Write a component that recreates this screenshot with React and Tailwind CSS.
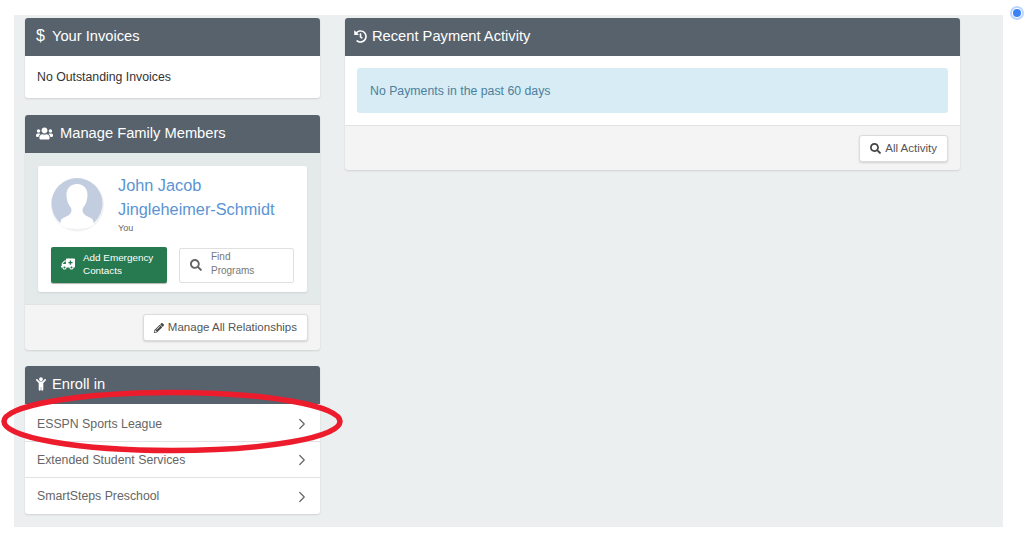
import React from 'react';
import { FaAmbulance, FaChild, FaHistory, FaPencilAlt, FaSearch, FaUsers } from 'react-icons/fa';
import { ChevronRight } from 'lucide-react';

const enrollItems = [
    { name: 'ESSPN Sports League', rowClass: 'h-[37px] pt-[3px]' },
    { name: 'Extended Student Services', rowClass: 'h-[36px] pt-[1px] border-t border-[#e2e2e2]' },
    { name: 'SmartSteps Preschool', rowClass: 'h-[37px] pt-[1px] border-t border-[#e2e2e2]' },
];

function PanelHeader({ icon, title, gap = 'gap-[7px]', pl = 'pl-[11px]' }) {
    return (
        <div className={`flex h-[38px] items-center ${gap} ${pl} rounded-t-[3px] bg-[#57626d] pb-[2px] text-[14.7px] text-white`}>
            {icon}
            <span>{title}</span>
        </div>
    );
}

function WhiteButton({ icon, label }) {
    return (
        <button type="button" className="flex h-[27px] items-center gap-[4px] rounded-[3px] border border-[#dcdcdc] bg-white px-[10px] text-[11.5px] text-[#555] shadow-[0_1px_2px_rgba(0,0,0,0.15)]">
            {icon}
            <span className="pt-[1px]">{label}</span>
        </button>
    );
}

export default function App() {
    return (
        <div className="relative h-[533px] w-[1024px] overflow-hidden bg-white pt-[15px] pl-[14px] font-['Liberation_Sans',Arial,sans-serif]">
            <div className="flex h-[512px] w-[989px] gap-[25px] bg-[#ebeff0] pt-[3px] pl-[11px]">
                <div className="flex w-[295px] flex-col">
                    <div className="rounded-[3px] bg-white shadow-[0_1px_2px_rgba(0,0,0,0.12)]">
                        <PanelHeader icon={<span className="w-[9px] text-[16px] leading-none">$</span>} title="Your Invoices" />
                        <div className="flex h-[42px] items-center pt-[1px] pl-[12px] text-[12.3px] text-[#333]">No Outstanding Invoices</div>
                    </div>

                    <div className="mt-[17px] rounded-[3px] bg-[#f4f4f4] shadow-[0_1px_2px_rgba(0,0,0,0.12)]">
                        <PanelHeader icon={<FaUsers className="h-[17px] w-[17px]" />} title="Manage Family Members" />
                        <div className="h-[152px] border-b border-[#e2e2e2] bg-[#e4e9e9] px-[13px] pt-[13px]">
                            <div className="h-[126px] rounded-[2px] bg-white px-[13px] pt-[11px] shadow-[0_1px_2px_rgba(0,0,0,0.1)]">
                                <div className="flex h-[58px] gap-[14px]">
                                    <svg width="53" height="56" viewBox="0 0 53 56" className="shrink-0">
                                        <circle cx="26.5" cy="28" r="26.5" fill="#f1f2f4" />
                                        <circle cx="26" cy="26.5" r="25.5" fill="#c2cde0" />
                                        <path d="M26 7c7 0 11 5 10.500 12-.3 5-2 9-4.500 12-1 2-.5 5 2 7 3 2 7 3 8 5l1 5c-5 3-11 4-17 4s-12-1-17-4l1-5c1-2 5-3 8-5 2.500-2 3-5 2-7-2.500-3-4.200-7-4.500-12C15 12 19 7 26 7z" fill="#fff" />
                                    </svg>
                                    <div className="-mt-[4px] min-w-0">
                                        <div className="text-[16.3px] leading-[24px] whitespace-nowrap text-[#5b94d3]">John Jacob<br />Jingleheimer-Schmidt</div>
                                        <div className="mt-[1px] text-[9px] leading-[12px] text-[#666]">You</div>
                                    </div>
                                </div>
                                <div className="mt-[12px] flex items-center gap-[12px]">
                                    <button type="button" className="flex h-[36px] w-[117px] items-center gap-[8px] rounded-[2px] bg-[#277a50] pb-[3px] pl-[10px] text-left text-[9.9px] leading-[13px] text-white shadow-[0_1px_1px_rgba(0,0,0,0.3)]">
                                        <FaAmbulance className="h-[12px] w-[14px] shrink-0 -scale-x-100" />
                                        <span>Add Emergency<br />Contacts</span>
                                    </button>
                                    <button type="button" className="flex h-[35px] w-[116px] items-center gap-[9px] rounded-[2px] border border-[#e0e0e0] bg-white pl-[10px] text-left text-[10px] leading-[14px] text-[#777]">
                                        <FaSearch className="h-[12px] w-[12px] shrink-0 text-[#666]" />
                                        <span className="pb-[2px]">Find<br />Programs</span>
                                    </button>
                                </div>
                            </div>
                        </div>
                        <div className="flex h-[45px] items-center justify-end pr-[12px]">
                            <WhiteButton icon={<FaPencilAlt className="h-[10px] w-[10px] text-[#444]" />} label="Manage All Relationships" />
                        </div>
                    </div>

                    <div className="mt-[16px] rounded-[3px] bg-white shadow-[0_1px_2px_rgba(0,0,0,0.12)]">
                        <PanelHeader icon={<FaChild className="h-[14px] w-[10px]" />} title="Enroll in" gap="gap-[6px]" />
                        {enrollItems.map((item) => (
                            <div key={item.name} className={`flex ${item.rowClass} items-center justify-between pr-[9px] pl-[12px] text-[12.3px] text-[#666]`}>
                                <span>{item.name}</span>
                                <ChevronRight className="h-[18px] w-[18px] text-[#666]" strokeWidth={1.6} />
                            </div>
                        ))}
                    </div>
                </div>

                <div className="h-[152px] w-[615px] rounded-[3px] bg-[#f4f4f4] shadow-[0_1px_2px_rgba(0,0,0,0.12)]">
                    <PanelHeader icon={<FaHistory className="h-[13px] w-[13px]" />} title="Recent Payment Activity" gap="gap-[5px]" pl="pl-[9px]" />
                    <div className="h-[70px] border-b border-[#e2e2e2] bg-white px-[12px] pt-[12px]">
                        <div className="flex h-[45px] items-center rounded-[3px] bg-[#d7ecf5] pt-[1px] pl-[13px] text-[12.3px] text-[#4d7f9c]">No Payments in the past 60 days</div>
                    </div>
                    <div className="flex h-[44px] items-center justify-end pr-[12px]">
                        <WhiteButton icon={<FaSearch className="h-[11px] w-[11px] text-[#444]" />} label="All Activity" />
                    </div>
                </div>
            </div>

            {/* red marker drawn over the first enroll row */}
            <svg className="absolute top-[388px] left-0" width="346" height="66" viewBox="0 0 346 66">
                <ellipse cx="172" cy="33.500" rx="168" ry="29" fill="none" stroke="#ec1c2d" strokeWidth="5.500" />
            </svg>

            {/* radio dot in the top right */}
            <div className="absolute top-[6px] left-[1010px] flex h-[14px] w-[14px] items-center justify-center rounded-full border-2 border-[#bcd5fb] bg-white">
                <div className="h-[8px] w-[8px] rounded-full bg-[#3b82f6]" />
            </div>
        </div>
    );
}
